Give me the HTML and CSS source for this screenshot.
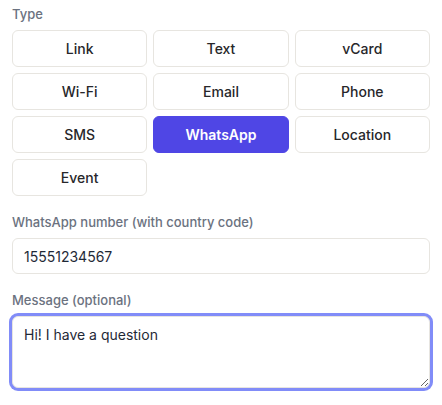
FILE: index.html
```html
<!DOCTYPE html>
<html lang="en">
<head>
<meta charset="utf-8">
<title>QR Type</title>
<link rel="stylesheet" href="styles.css">
</head>
<body>
<div class="form">
  <div class="field">
    <div class="label">Type</div>
    <div class="types">
      <button class="type">Link</button>
      <button class="type">Text</button>
      <button class="type">vCard</button>
      <button class="type">Wi-Fi</button>
      <button class="type">Email</button>
      <button class="type">Phone</button>
      <button class="type">SMS</button>
      <button class="type active">WhatsApp</button>
      <button class="type">Location</button>
      <button class="type">Event</button>
    </div>
  </div>
  <div class="field">
    <label class="label" for="num">WhatsApp number (with country code)</label>
    <input id="num" class="input" type="text" value="15551234567">
  </div>
  <div class="field">
    <label class="label" for="msg">Message (optional)</label>
    <textarea id="msg" class="textarea focused">Hi! I have a question</textarea>
  </div>
</div>
</body>
</html>
```
FILE: styles.css
```css
* { box-sizing: border-box; }
html, body { margin: 0; padding: 0; background: #ffffff; }
body {
  font-family: Inter, "Liberation Sans", Arial, sans-serif;
  color: #1f2937;
}
.form {
  padding: 4px 12px 12px;
  display: flex;
  flex-direction: column;
  gap: 16px;
}
.field {
  display: flex;
  flex-direction: column;
}
.label {
  display: block;
  font-size: 13px;
  line-height: 20px;
  font-weight: 500;
  color: #6b7280;
  margin-bottom: 6px;
}
.types {
  display: grid;
  grid-template-columns: repeat(3, 1fr);
  gap: 6px;
}
.type {
  font-family: inherit;
  font-size: 14px;
  line-height: 19px;
  font-weight: 500;
  color: #27272a;
  background: #ffffff;
  border: 1px solid #e7e5e0;
  border-radius: 6px;
  padding: 8px 4px;
  text-align: center;
  cursor: pointer;
}
.type.active {
  background: #4f46e5;
  border-color: #4f46e5;
  color: #ffffff;
  font-weight: 600;
}
.input {
  font-family: inherit;
  font-size: 14px;
  color: #1f2937;
  height: 36px;
  padding: 0 11px;
  border: 1px solid #e7e5e0;
  border-radius: 6px;
  background: #ffffff;
  width: 100%;
  outline: none;
}
.textarea {
  font-family: inherit;
  font-size: 14px;
  line-height: 20px;
  color: #1f2937;
  height: 72px;
  padding: 8px 11px;
  border: 1px solid #e7e5e0;
  border-radius: 6px;
  background: #ffffff;
  width: 100%;
  resize: vertical;
  outline: none;
  display: block;
}
.textarea.focused {
  box-shadow: 0 0 0 3px #818cf8;
}
```
